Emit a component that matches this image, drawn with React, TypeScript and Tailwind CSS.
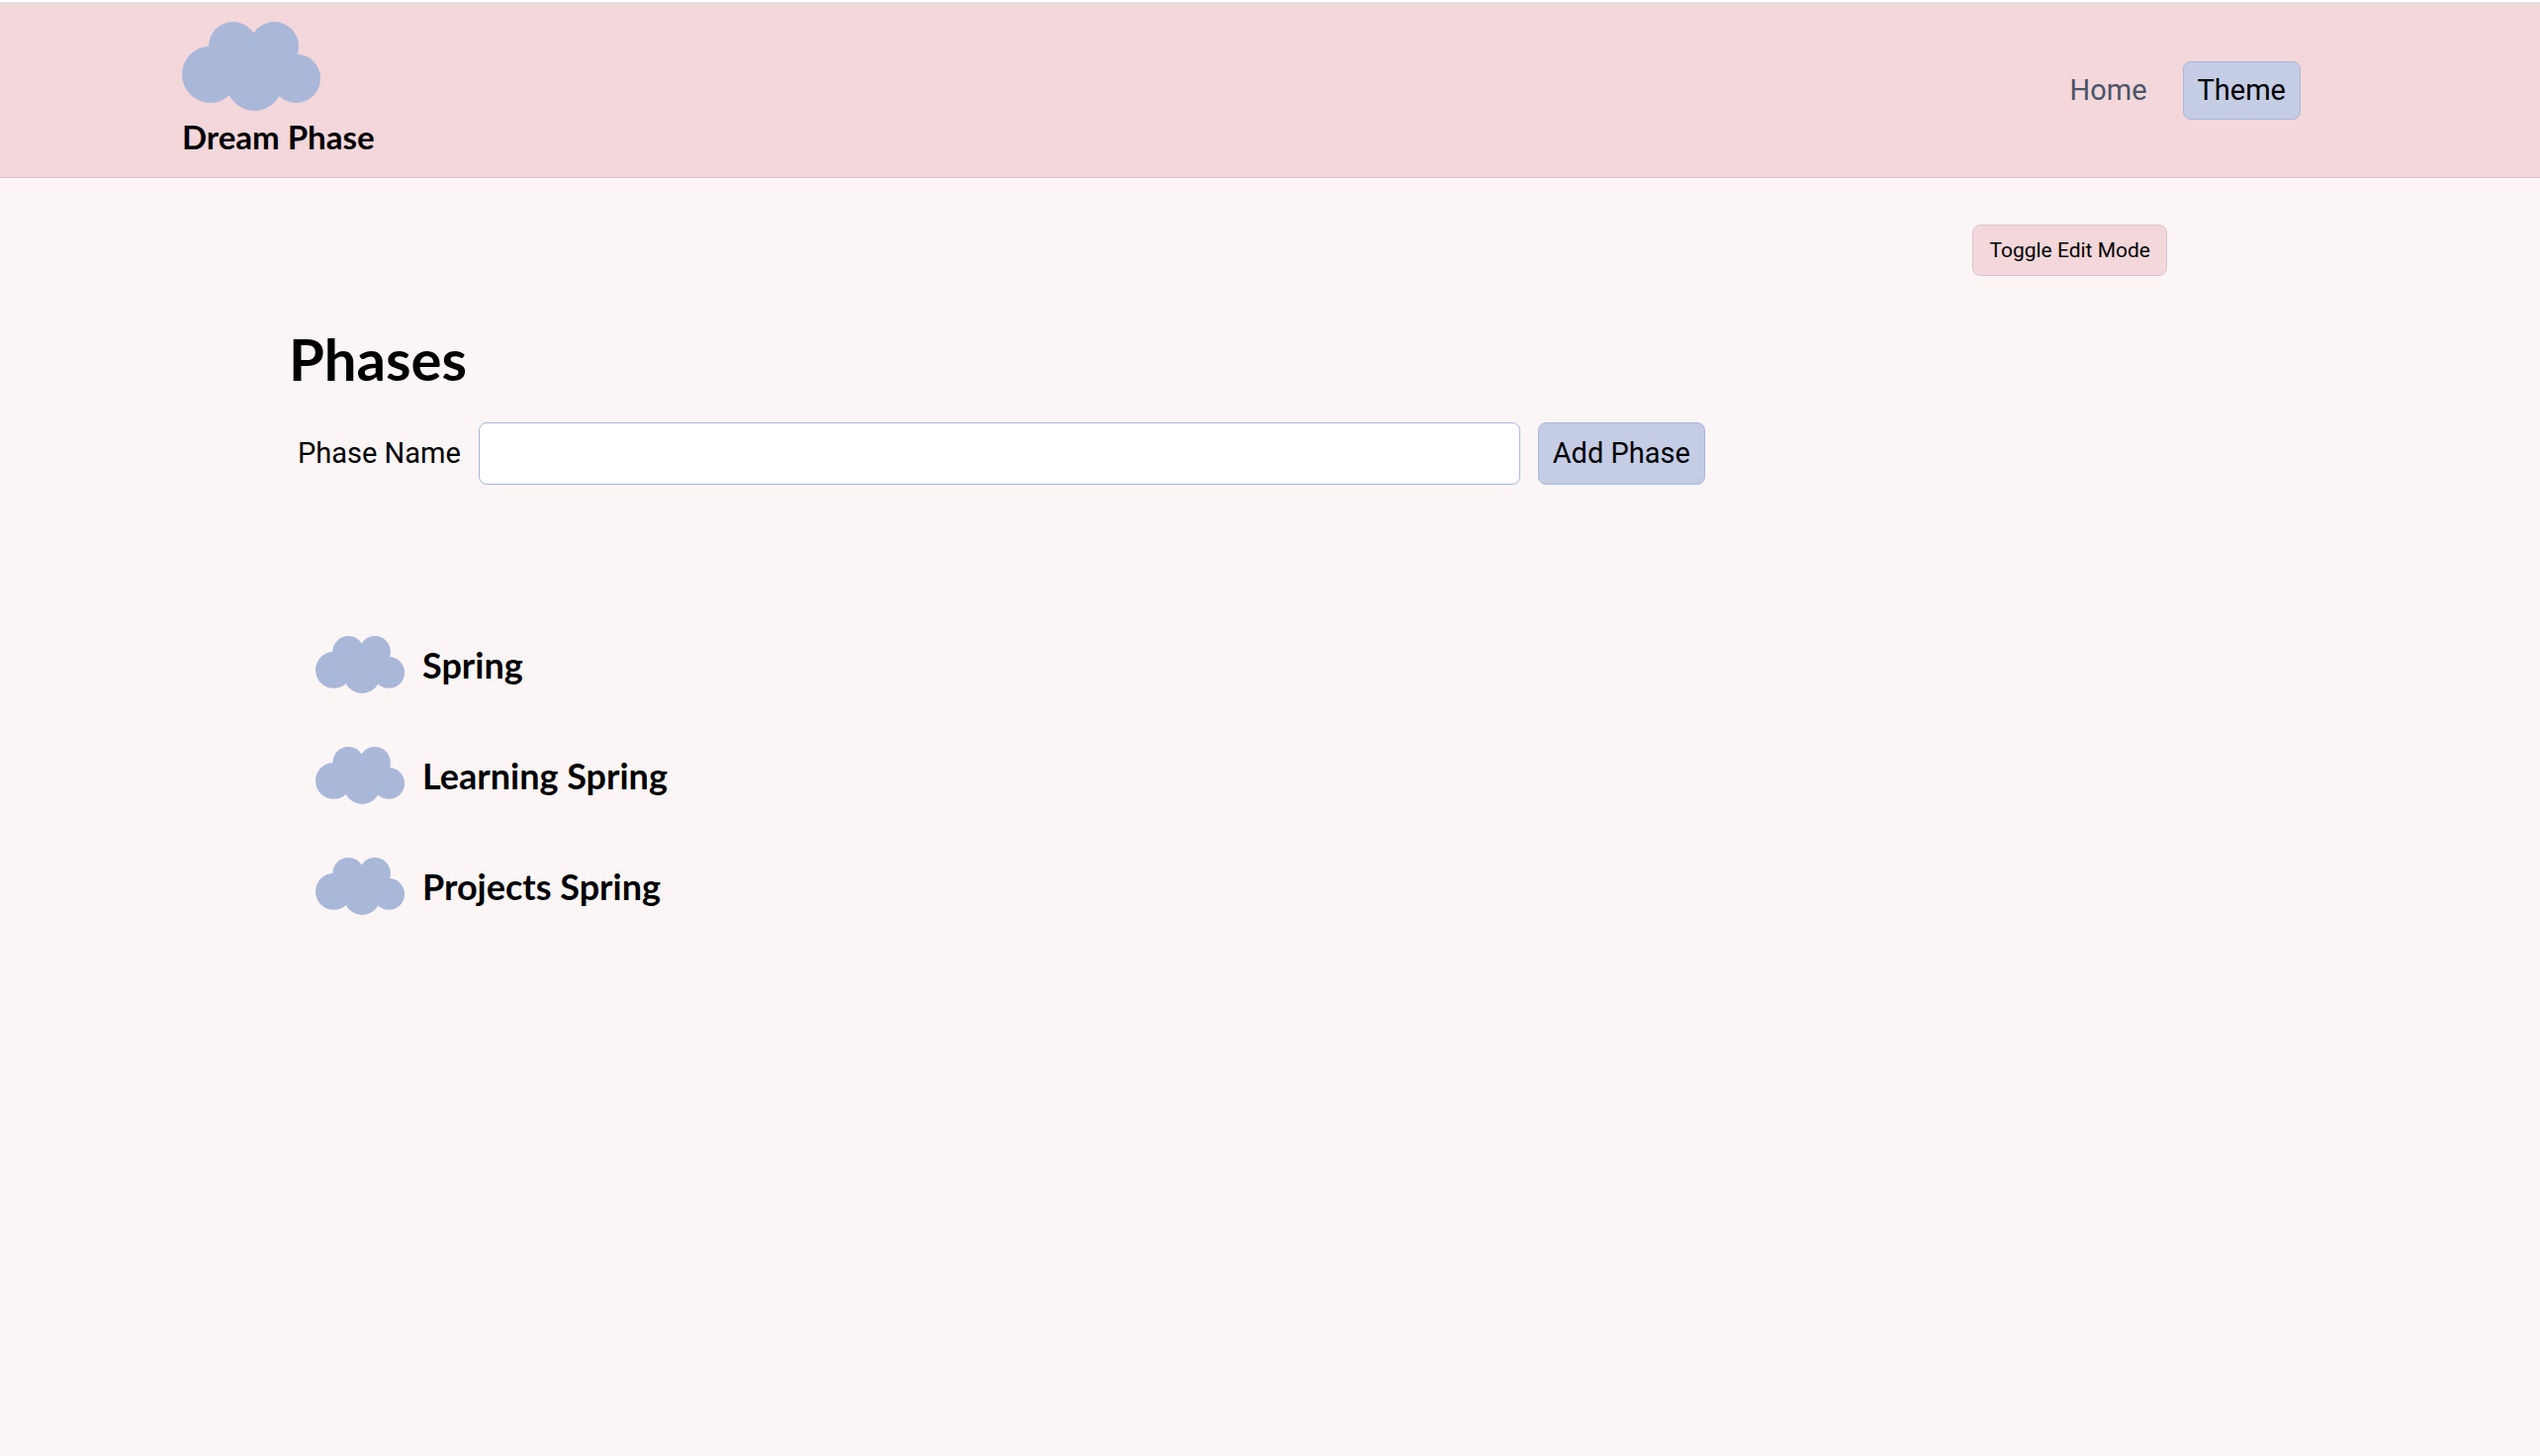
import { useState, type FormEvent } from "react";

interface Phase { id: number; name: string }

const INITIAL_PHASES: Phase[] = [
  { id: 1, name: "Spring" },
  { id: 2, name: "Learning Spring" },
  { id: 3, name: "Projects Spring" },
];

function Cloud({ className }: { className: string }) {
  return (
    <svg viewBox="0 0 420 270" className={`shrink-0 fill-[#a9b7d9] ${className}`} aria-hidden="true">
      <circle cx="86" cy="160" r="86" />
      <circle cx="155" cy="74" r="74" />
      <circle cx="280" cy="74" r="74" />
      <circle cx="346" cy="172" r="74" />
      <circle cx="220" cy="184" r="86" />
      <rect x="90" y="90" width="250" height="120" />
    </svg>
  );
}

function Header() {
  return (
    <header className="flex items-center justify-between border-t-2 border-b border-t-[#e2e2e2] border-b-[#d8c5ca] bg-[#f3d7da] pt-[18px] pb-[18px] pl-46 pr-[242px]">
      <a href="#" className="flex flex-col items-start gap-1">
        <Cloud className="w-[140px] h-[90px]" />
        <span className="font-['Lato',sans-serif] text-[33px] leading-[45px] font-bold text-black">Dream Phase</span>
      </a>
      <nav className="flex items-center gap-9">
        <a href="#" className="text-[29px] leading-[43px] text-[#4b5468]">Home</a>
        <button type="button" className="rounded-lg border border-[#a9b7d9] bg-[#c5cde5] px-3.5 py-2 text-[29px] leading-[41px] text-black">
          Theme
        </button>
      </nav>
    </header>
  );
}

export default function App() {
  const [phases, setPhases] = useState(INITIAL_PHASES);
  const [name, setName] = useState("");
  const [editing, setEditing] = useState(false);

  function addPhase(e: FormEvent) {
    e.preventDefault();
    if (!name.trim()) return;
    setPhases((prev) => [...prev, { id: prev.length + 1, name: name.trim() }]);
    setName("");
  }

  return (
    <div className="min-h-screen bg-[#fcf6f6] pt-0.5 font-['Roboto',sans-serif] text-black shadow-[inset_0_2px_0_white]">
      <Header />
      <main className="flex min-h-[79vh] flex-col bg-[#fbf5f5] pt-[47px] pl-[292px] pr-[377px]">
        <button
          type="button"
          aria-pressed={editing}
          onClick={() => setEditing(!editing)}
          className="self-end rounded-lg border border-[#d9c3d0] bg-[#f3d7da] px-4 py-2 text-[21px] leading-[34px]"
        >
          Toggle Edit Mode
        </button>

        <h1 className="mt-[46px] font-['Lato',sans-serif] text-[58px] leading-[76px] font-bold">Phases</h1>

        <form onSubmit={addPhase} className="mt-[26px] flex w-[75.4%] items-stretch gap-[18px] pl-[9px]">
          <label htmlFor="phase-name" className="self-center text-[29px] leading-[43px]">Phase Name</label>
          <input
            id="phase-name"
            value={name}
            onChange={(e) => setName(e.target.value)}
            className="min-w-0 flex-1 rounded-lg border border-[#a9b7d9] bg-white px-4 text-[29px]"
          />
          <button type="submit" className="rounded-lg border border-[#a9b7d9] bg-[#c5cde5] px-3.5 py-2 text-[29px] leading-[45px]">
            Add Phase
          </button>
        </form>

        <ul className="mt-[153px] flex flex-col gap-[54px] pl-[27px]">
          {phases.map((p) => (
            <li key={p.id} className="flex items-center gap-[18px]">
              <Cloud className="w-[90px] h-[58px]" />
              <a href="#" className="font-['Lato',sans-serif] text-[36px] leading-[58px] font-bold">{p.name}</a>
            </li>
          ))}
        </ul>
      </main>
    </div>
  );
}
